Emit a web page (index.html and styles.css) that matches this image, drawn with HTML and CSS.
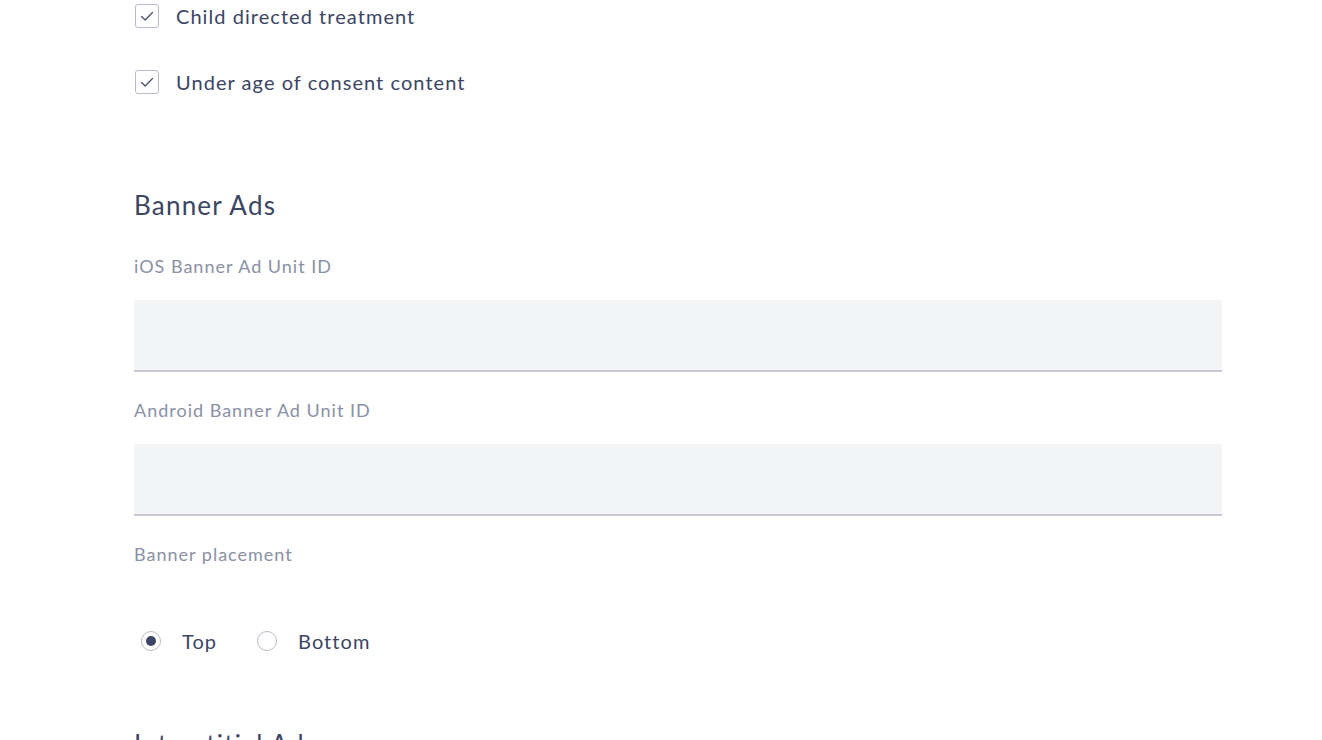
FILE: index.html
```html
<!DOCTYPE html>
<html>
<head>
<meta charset="utf-8">
<link rel="stylesheet" href="styles.css">
</head>
<body>
<div class="form">
  <div class="checks">
    <label class="check">
      <span class="box"><svg width="16" height="16" viewBox="0 0 16 16"><path d="M2.5 8.5 L6.2 12 L13.5 4.5" fill="none" stroke="#4a5270" stroke-width="1.3" stroke-linecap="round" stroke-linejoin="round"/></svg></span>
      <span class="check-text">Child directed treatment</span>
    </label>
    <label class="check">
      <span class="box"><svg width="16" height="16" viewBox="0 0 16 16"><path d="M2.5 8.5 L6.2 12 L13.5 4.5" fill="none" stroke="#4a5270" stroke-width="1.3" stroke-linecap="round" stroke-linejoin="round"/></svg></span>
      <span class="check-text">Under age of consent content</span>
    </label>
  </div>

  <section class="section">
    <h2 class="heading">Banner Ads</h2>
    <div class="field">
      <div class="label">iOS Banner Ad Unit ID</div>
      <div class="input"></div>
    </div>
    <div class="field">
      <div class="label">Android Banner Ad Unit ID</div>
      <div class="input"></div>
    </div>
    <div class="field">
      <div class="label">Banner placement</div>
      <div class="radios">
        <label class="radio"><span class="dot on"></span><span class="radio-text">Top</span></label>
        <label class="radio"><span class="dot"></span><span class="radio-text">Bottom</span></label>
      </div>
    </div>
  </section>

  <section class="section next">
    <h2 class="heading">Interstitial Ads</h2>
  </section>
</div>
</body>
</html>
```

FILE: styles.css
```css
html, body {
  margin: 0;
  padding: 0;
  background: #ffffff;
  overflow: hidden;
}
body {
  font-family: Lato, "Open Sans", sans-serif;
  color: #3c4563;
}
.form {
  width: 1088px;
  margin-left: 134px;
  padding-top: 4px;
}
.checks {
  display: flex;
  flex-direction: column;
  gap: 42px;
}
.check {
  display: flex;
  align-items: center;
  height: 24px;
  gap: 17px;
}
.box {
  width: 22px;
  height: 22px;
  border: 1px solid #b9bcc8;
  border-radius: 3px;
  margin-left: 1px;
  display: flex;
  align-items: center;
  justify-content: center;
  box-sizing: content-box;
}
.check-text {
  font-size: 20px;
  letter-spacing: 1.05px;
}
.section {
  margin-top: 95px;
}
.heading {
  margin: 0;
  font-weight: 400;
  font-size: 26px;
  line-height: 32px;
  letter-spacing: 1.2px;
  color: #3c4563;
}
.field {
  margin-top: 33px;
}
.field + .field {
  margin-top: 26px;
}
.label {
  font-size: 18px;
  line-height: 24px;
  color: #8a90a5;
  letter-spacing: 1px;
}
.input {
  margin-top: 22px;
  height: 70px;
  background: #f3f4f6;
  border-bottom: 2px solid #c8c9d5;
}
.radios {
  margin-top: 55px;
  height: 40px;
  display: flex;
  align-items: center;
  padding-left: 7px;
  gap: 40px;
}
.radio {
  display: flex;
  align-items: center;
  gap: 21px;
}
.dot {
  width: 18px;
  height: 18px;
  border: 1px solid #b9bcc8;
  border-radius: 50%;
  display: flex;
  align-items: center;
  justify-content: center;
}
.dot.on::after {
  content: "";
  width: 10px;
  height: 10px;
  border-radius: 50%;
  background: #3c4563;
}
.radio-text {
  font-size: 20px;
  letter-spacing: 1.05px;
}
.section.next {
  margin-top: 67px;
}
```
